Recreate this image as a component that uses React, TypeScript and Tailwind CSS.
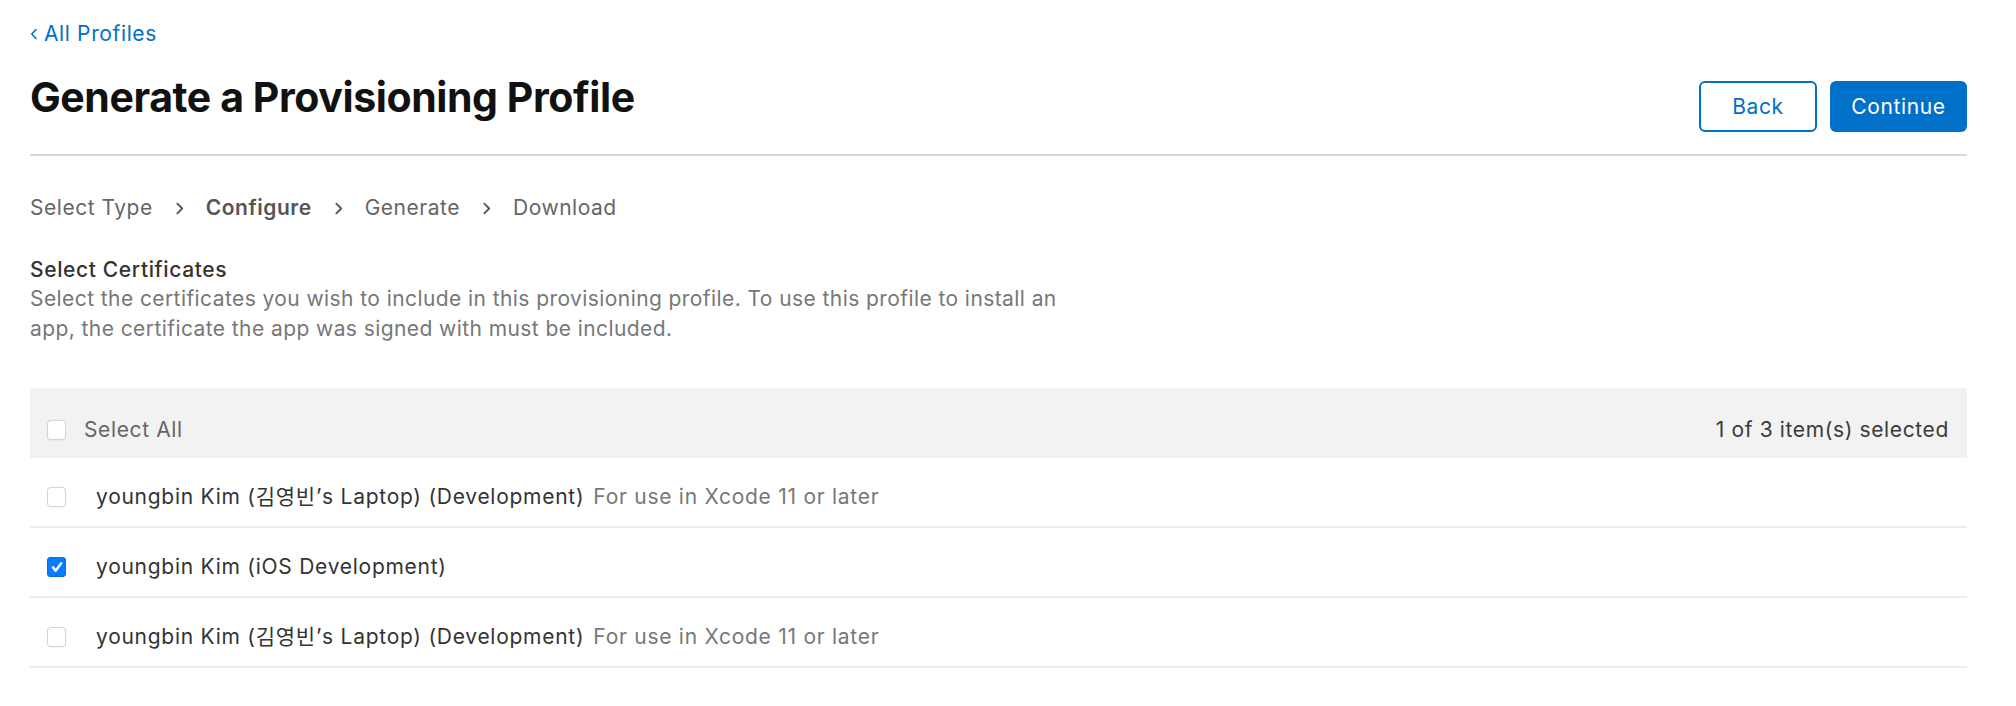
import React, { useState } from "react";

type Certificate = {
	id: number;
	name: string;
	note?: string;
};

const certificates: Certificate[] = [
	{ id: 1, name: "youngbin Kim (김영빈’s Laptop) (Development)", note: "For use in Xcode 11 or later" },
	{ id: 2, name: "youngbin Kim (iOS Development)" },
	{ id: 3, name: "youngbin Kim (김영빈’s Laptop) (Development)", note: "For use in Xcode 11 or later" },
];

const steps = ["Select Type", "Configure", "Generate", "Download"];

// Small mac-style checkbox
const Checkbox: React.FC<{ checked: boolean; onChange: () => void }> = ({ checked, onChange }) => {
	return (
		<button
			onClick={onChange}
			className={`flex h-[20px] w-[19px] shrink-0 items-center justify-center rounded-[4px] ${
				checked
					? "bg-[#0a7cff] shadow-[inset_0_0_0_1px_#0a6ee6]"
					: "bg-white shadow-[inset_0_0_0_1px_#d4d4d4,0_1px_1px_rgba(0,0,0,0.04)]"
			}`}
		>
			{checked && (
				<svg className="h-[14px] w-[14px]" viewBox="0 0 12 12" fill="none">
					<path d="M2.6 6.3l2.3 2.8L9.6 2.8" stroke="white" strokeWidth={2.1} strokeLinecap="round" strokeLinejoin="round" />
				</svg>
			)}
		</button>
	);
};

const Chevron: React.FC = () => (
	<svg className="mx-[22px] h-[13px] w-[9px] text-[#555]" viewBox="0 0 8 12" fill="none">
		<path d="M2 1.5L6.5 6L2 10.5" stroke="currentColor" strokeWidth={1.7} strokeLinecap="round" strokeLinejoin="round" />
	</svg>
);

export default function App() {
	const [selected, setSelected] = useState<number[]>([2]);

	const toggle = (id: number) => {
		setSelected((prev) => (prev.includes(id) ? prev.filter((x) => x !== id) : [...prev, id]));
	};

	const allSelected = selected.length === certificates.length;

	return (
		<div className="min-h-screen bg-white pl-[30px] pr-[49px] pt-5 font-['Inter','Noto_Sans_CJK_KR',sans-serif] text-[21px] tracking-[0.03em]">
			{/* Back link */}
			<a href="#" className="flex h-[28px] items-center text-[21px] leading-[28px] text-[#0070c9]">
				<svg className="mr-[6px] h-[12px] w-[8px]" viewBox="0 0 8 12" fill="none">
					<path d="M6 1.5L1.8 6L6 10.5" stroke="currentColor" strokeWidth={1.6} strokeLinecap="round" strokeLinejoin="round" />
				</svg>
				All Profiles
			</a>

			{/* Header */}
			<div className="mt-6 flex items-start justify-between border-b-2 border-[#d9d9d9] pb-[22px]">
				<h1 className="text-[41px] font-bold leading-[50px] tracking-[-0.01em] text-[#111]">
					Generate a Provisioning Profile
				</h1>
				<div className="mt-[9px] flex gap-[13px]">
					<button className="h-[51px] w-[118px] rounded-[6px] border-2 border-[#0070c9] bg-white text-[21px] text-[#0070c9]">
						Back
					</button>
					<button className="h-[51px] w-[137px] rounded-[6px] bg-[#0070c9] text-[21px] text-white">
						Continue
					</button>
				</div>
			</div>

			{/* Steps */}
			<div className="mt-[38px] flex h-[28px] items-center leading-[28px] tracking-[0.025em] text-[#666]">
				{steps.map((step, i) => (
					<React.Fragment key={step}>
						{i > 0 && <Chevron />}
						<span className={step === "Configure" ? "font-semibold text-[#555]" : ""}>{step}</span>
					</React.Fragment>
				))}
			</div>

			{/* Section intro */}
			<h2 className="mt-[34px] font-medium leading-[28px] text-[#333]">Select Certificates</h2>
			<p className="max-w-[1050px] leading-[30px] tracking-[0.02em] text-[#777]">
				Select the certificates you wish to include in this provisioning profile. To use this profile to install an
				app, the certificate the app was signed with must be included.
			</p>

			{/* Certificates table */}
			<div className="mt-[44px]">
				<div className="flex h-[70px] items-center justify-between bg-[#f2f2f2] pl-[17px] pr-[18px] pt-[14px] text-[#666]">
					<div className="flex items-center gap-[18px]">
						<Checkbox
							checked={allSelected}
							onChange={() => setSelected(allSelected ? [] : certificates.map((c) => c.id))}
						/>
						<span>Select All</span>
					</div>
					<span className="text-[#3a3a3a]">
						{selected.length} of {certificates.length} item(s) selected
					</span>
				</div>

				{certificates.map((cert) => (
					<div key={cert.id} className="flex h-[70px] items-center gap-[30px] border-b-2 border-[#ececec] pl-[17px] pt-[10px]">
						<Checkbox checked={selected.includes(cert.id)} onChange={() => toggle(cert.id)} />
						<div className="tracking-[0.035em]">
							<span className="text-[#333]">{cert.name}</span>
							{cert.note && <span className="ml-[9px] text-[#777]">{cert.note}</span>}
						</div>
					</div>
				))}
			</div>
		</div>
	);
}
